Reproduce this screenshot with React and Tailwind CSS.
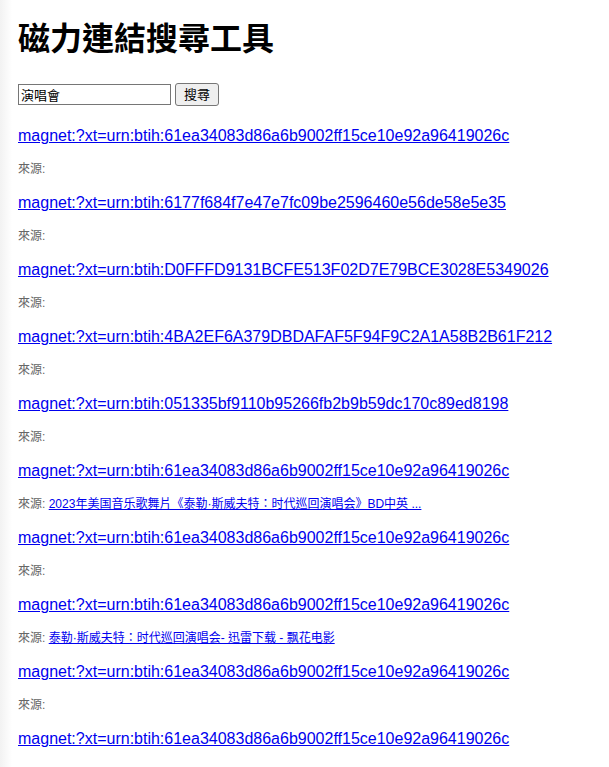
const results = [
  { magnet: 'magnet:?xt=urn:btih:61ea34083d86a6b9002ff15ce10e92a96419026c', source: '' },
  { magnet: 'magnet:?xt=urn:btih:6177f684f7e47e7fc09be2596460e56de58e5e35', source: '' },
  { magnet: 'magnet:?xt=urn:btih:D0FFFD9131BCFE513F02D7E79BCE3028E5349026', source: '' },
  { magnet: 'magnet:?xt=urn:btih:4BA2EF6A379DBDAFAF5F94F9C2A1A58B2B61F212', source: '' },
  { magnet: 'magnet:?xt=urn:btih:051335bf9110b95266fb2b9b59dc170c89ed8198', source: '' },
  {
    magnet: 'magnet:?xt=urn:btih:61ea34083d86a6b9002ff15ce10e92a96419026c',
    source: '2023年美国音乐歌舞片《泰勒·斯威夫特：时代巡回演唱会》BD中英 ...',
  },
  { magnet: 'magnet:?xt=urn:btih:61ea34083d86a6b9002ff15ce10e92a96419026c', source: '' },
  {
    magnet: 'magnet:?xt=urn:btih:61ea34083d86a6b9002ff15ce10e92a96419026c',
    source: '泰勒·斯威夫特：时代巡回演唱会- 迅雷下载 - 飘花电影',
  },
  { magnet: 'magnet:?xt=urn:btih:61ea34083d86a6b9002ff15ce10e92a96419026c', source: '' },
  { magnet: 'magnet:?xt=urn:btih:61ea34083d86a6b9002ff15ce10e92a96419026c', source: null },
];

const font = { fontFamily: '"Liberation Sans", Arial, "Noto Sans CJK TC", sans-serif' };

export default function App() {
  return (
    <div
      className="h-[767px] overflow-hidden bg-gradient-to-r from-[#f2f2f2] via-white via-[2%] to-white text-black"
      style={font}
    >
      <div className="px-[18px] pt-[21px]">
        {/* Title */}
        <h1 className="text-[32px] font-bold leading-[37px]">磁力連結搜尋工具</h1>

        {/* Search form */}
        <div className="mt-[25px] flex items-center gap-[4px]">
          <input
            type="text"
            defaultValue="演唱會"
            className="h-[21px] w-[153px] border border-[#767676] bg-white px-[2px] text-[13px] leading-none outline-none"
          />
          <button className="h-[23px] rounded-[3px] border border-[#767676] bg-[#efefef] px-[8px] text-[13px] leading-none">
            搜尋
          </button>
        </div>

        {/* Results */}
        <div className="mt-[20px]">
          {results.map((r, i) => (
            <div key={i} className="pb-[17px]">
              <a href="#" className="block text-[16px] leading-5 text-[#0000ee] underline">
                {r.magnet}
              </a>
              {r.source !== null && (
                <p className="mt-[16px] text-[12px] leading-[14px] text-[#666]">
                  來源:{' '}
                  {r.source && (
                    <a href="#" className="text-[#0000ee] underline">
                      {r.source}
                    </a>
                  )}
                </p>
              )}
            </div>
          ))}
        </div>
      </div>
    </div>
  );
}
